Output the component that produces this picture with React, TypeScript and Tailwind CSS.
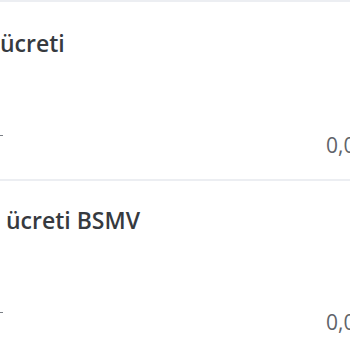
export default function App() {
  const Section = ({ title, titleOffset, pt }: { title: string; titleOffset: string; pt: string }) => (
    <div className={`border-t-2 border-[#eceef2] ${pt} pb-[20px]`}>
      <div className={`${titleOffset} whitespace-nowrap text-[23px] leading-[32px] font-semibold text-[#363a3f]`} style={{ fontFamily: '"Open Sans", sans-serif' }}>
        {title}
      </div>
      <div className="relative mt-[72px] h-[28px]">
        <div className="absolute left-0 top-[4px] h-[1px] w-[3px] bg-[#7a7f85]" />
        <div className="pl-[326px] whitespace-nowrap text-[21px] leading-[28px] text-[#5f646a]" style={{ fontFamily: '"Open Sans", sans-serif' }}>
          0,00
        </div>
      </div>
    </div>
  );
  return (
    <div className="w-[350px] h-[350px] overflow-hidden bg-white">
      <Section title="ücreti" titleOffset="ml-0" pt="pt-[25px]" />
      <Section title="ücreti BSMV" titleOffset="ml-[6px]" pt="pt-[23px]" />
    </div>
  );
}
